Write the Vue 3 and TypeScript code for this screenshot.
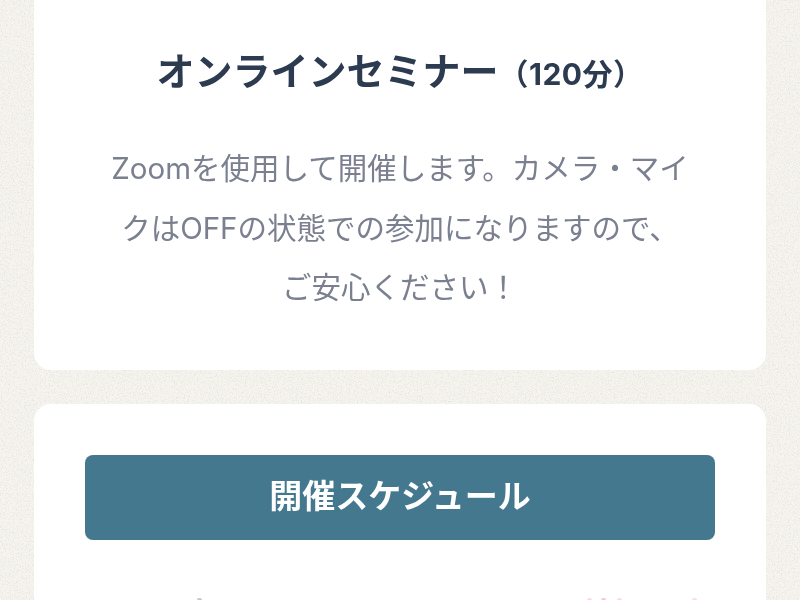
<script setup lang="ts">
const lines: string[] = [
  'Zoomを使用して開催します。カメラ・マイ',
  'クはOFFの状態での参加になりますので、',
  'ご安心ください！',
]
const marks: { x: number; color: string }[] = [
  { x: 197, color: '#c9c9c9' },
  { x: 587, color: '#fbdbe4' },
  { x: 601, color: '#f9c8d6' },
  { x: 617, color: '#fbdbe4' },
  { x: 692, color: '#fbdbe4' },
]
</script>

<template>
  <div class="page">
    <svg class="grain" width="800" height="600" aria-hidden="true">
      <filter id="paper" x="0" y="0" width="100%" height="100%">
        <feTurbulence type="fractalNoise" baseFrequency="0.75" numOctaves="2" seed="4" />
        <feColorMatrix type="matrix" values="0 0 0 0 0.76  0 0 0 0 0.73  0 0 0 0 0.68  2.2 0 0 0 -1.02" />
      </filter>
      <rect width="800" height="600" filter="url(#paper)" />
    </svg>
    <section class="card intro">
      <h2 class="title">オンラインセミナー<span class="duration">（120分）</span></h2>
      <p class="body">
        <span v-for="line in lines" :key="line" class="line">{{ line }}</span>
      </p>
    </section>
    <section class="card schedule">
      <div class="banner"><span class="banner-text">開催スケジュール</span></div>
    </section>
    <i
      v-for="mark in marks"
      :key="mark.x"
      class="mark"
      :style="{ left: mark.x + 'px', background: mark.color }"
    ></i>
  </div>
</template>

<style>
html, body { margin: 0; padding: 0; overflow: hidden; }
</style>

<style scoped>
.page {
  position: relative;
  width: 800px;
  height: 600px;
  overflow: hidden;
  box-sizing: border-box;
  padding: 0 34px;
  display: flex;
  flex-direction: column;
  gap: 34px;
  background: #f6f4ef;
  font-family: "Inter", "Noto Sans CJK JP", sans-serif;
}
.grain { position: absolute; left: 0; top: 0; }
.card {
  position: relative;
  background: #fff;
  border-radius: 0 0 17px 17px;
  flex: none;
}
.intro {
  height: 370px;
  box-sizing: border-box;
  padding-top: 47px;
  text-align: center;
}
.title {
  margin: 0;
  font-size: 38px;
  line-height: 48px;
  font-weight: 700;
  color: #2c3b50;
  white-space: nowrap;
  filter: blur(0.4px);
}
.duration { font-size: 30px; letter-spacing: 0.5px; }
.body {
  margin: 41px 0 0;
  font-size: 29.5px;
  line-height: 59.5px;
  color: #7b8090;
  font-weight: 400;
  white-space: nowrap;
  filter: blur(0.4px);
}
.line { display: block; }
.schedule {
  height: 220px;
  border-radius: 17px 17px 0 0;
  padding: 51px 51px 0;
}
.banner {
  height: 85px;
  line-height: 82px;
  border-radius: 8px;
  background: #43788e;
  color: #fff;
  text-align: center;
  font-size: 33px;
  font-weight: 700;
}
.banner-text { display: inline-block; filter: blur(0.4px); }
.mark {
  position: absolute;
  top: 598px;
  width: 5px;
  height: 2px;
  border-radius: 2px 2px 0 0;
}
</style>
